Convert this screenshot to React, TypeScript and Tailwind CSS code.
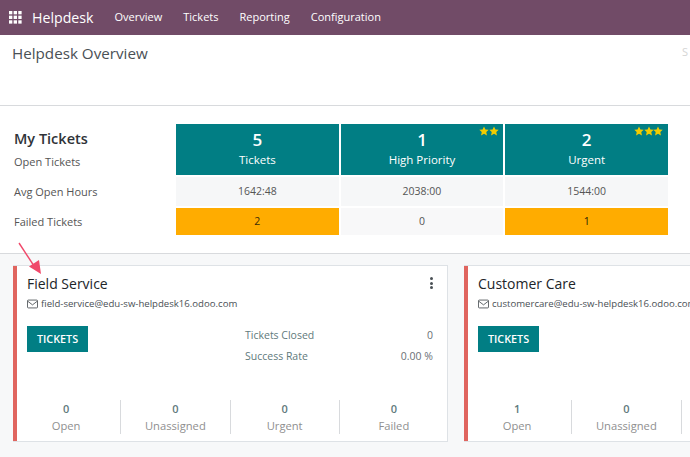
function Star({ count }: { count: number }) {
  return (
    <div className="absolute top-[2px] right-[5px] flex text-[#f3cc00]">
      {Array.from({ length: count }).map((_, i) => (
        <svg key={i} viewBox="0 0 24 24" className="w-[10px] h-[10px] -mx-[0.25px]" fill="currentColor">
          <path d="M12 1l3.4 7.2 7.9 1-5.8 5.4 1.5 7.9L12 18.6l-7 3.9 1.5-7.9L.7 9.2l7.9-1z" />
        </svg>
      ))}
    </div>
  );
}

function MailIcon() {
  return (
    <svg viewBox="0 0 14 12" className="w-[11px] h-[10px] shrink-0" fill="none" stroke="#4a5055" strokeWidth="1.1">
      <rect x="0.6" y="1" width="12.8" height="10" rx="1.2" />
      <path d="M1 2.5l6 4.6 6-4.6" />
    </svg>
  );
}

function TopCell({ value, label, stars }: { value: string; label: string; stars?: number }) {
  return (
    <div className="relative h-[51px] pb-[2px] bg-[#017e84] text-white flex flex-col items-center justify-center">
      {stars ? <Star count={stars} /> : null}
      <div className="text-[17px] leading-[22px] font-semibold">{value}</div>
      <div className="text-[11.5px] leading-[17px]">{label}</div>
    </div>
  );
}

function StatCol({ value, label, last }: { value: string; label: string; last?: boolean }) {
  return (
    <div className={`flex-1 h-[34px] flex flex-col items-center justify-center ${last ? "" : "border-r border-[#d8dadd]"}`}>
      <div className="text-[11px] leading-[16px] font-semibold text-[#5f7a7c]">{value}</div>
      <div className="text-[11.2px] leading-[17px] text-[#8f8f8f]">{label}</div>
    </div>
  );
}

function TeamCard({ name, email, open, showStats }: { name: string; email: string; open: string; showStats?: boolean }) {
  return (
    <div className="w-[435px] shrink-0 h-[177px] bg-white border border-[#dee2e6] border-l-0 flex">
      <div className="w-[4px] bg-[#e0655f] shrink-0" />
      <div className="flex-1 min-w-0 flex flex-col pl-[10px] pt-[8px] pb-[7px]">
        <div className="flex items-start justify-between">
          <div className="text-[14px] leading-[20px] font-medium text-[#212529] whitespace-nowrap">{name}</div>
          {showStats ? (
            <div className="flex flex-col gap-[1.5px] mr-[14px] mt-[3px]">
              <span className="w-[3px] h-[3px] bg-[#4a5055] rounded-full" />
              <span className="w-[3px] h-[3px] bg-[#4a5055] rounded-full" />
              <span className="w-[3px] h-[3px] bg-[#4a5055] rounded-full" />
            </div>
          ) : null}
        </div>
        <div className="flex items-center gap-[3px] mt-[3px] text-[9.6px] leading-[14px] text-[#4a5055] whitespace-nowrap">
          <MailIcon />
          <span>{email}</span>
        </div>
        <div className="flex mt-[15px]">
          <div className="w-[61px] h-[26px] pt-[1px] bg-[#017e84] text-white text-[10.8px] font-semibold flex items-center justify-center shrink-0">
            TICKETS
          </div>
          {showStats ? (
            <div className="ml-[157px] w-[188px] -mt-[1px] text-[10.5px] leading-[21px]">
              <div className="flex justify-between text-[#5f7a7c]">
                <span>Tickets Closed</span>
                <span className="text-[#6b7075]">0</span>
              </div>
              <div className="flex justify-between text-[#5f7a7c]">
                <span>Success Rate</span>
                <span className="text-[#6b7075]">0.00 %</span>
              </div>
            </div>
          ) : null}
        </div>
        <div className="mt-auto -ml-[15px] flex w-[436px] shrink-0">
          <StatCol value={open} label="Open" />
          <StatCol value="0" label="Unassigned" />
          <StatCol value="0" label="Urgent" />
          <StatCol value="0" label="Failed" last />
        </div>
      </div>
    </div>
  );
}

export default function App() {
  return (
    <div className="relative w-[690px] h-[457px] overflow-hidden bg-white text-[#4a5055]" style={{ fontFamily: '"Open Sans", "Noto Sans", sans-serif' }}>
      {/* navbar */}
      <nav className="h-[35px] bg-[#714b67] text-white flex items-center pl-[9px]">
        <svg viewBox="0 0 14 14" className="w-[13px] h-[13px]" fill="#fff">
          <rect x="0" y="0" width="3.6" height="3.6" /><rect x="5" y="0" width="3.6" height="3.6" /><rect x="10" y="0" width="3.6" height="3.6" />
          <rect x="0" y="5" width="3.6" height="3.6" /><rect x="5" y="5" width="3.6" height="3.6" /><rect x="10" y="5" width="3.6" height="3.6" />
          <rect x="0" y="10" width="3.6" height="3.6" /><rect x="5" y="10" width="3.6" height="3.6" /><rect x="10" y="10" width="3.6" height="3.6" />
        </svg>
        <span className="ml-[10px] text-[14.2px]">Helpdesk</span>
        <div className="ml-[21px] flex gap-[21px] text-[11px]">
          <span>Overview</span>
          <span>Tickets</span>
          <span>Reporting</span>
          <span>Configuration</span>
        </div>
      </nav>

      {/* control panel */}
      <div className="h-[71px] border-b border-[#d8dadd] flex justify-between pl-[12px] pt-[7px]">
        <div className="text-[15.2px] leading-[22px] text-[#4a5055]">Helpdesk Overview</div>
        <div className="w-[8px] overflow-hidden pt-[1px] text-[11px] text-[#d5d5d5] leading-[18px]">S</div>
      </div>

      {/* my tickets */}
      <div className="h-[148px] pl-[14px] pt-[18px] flex border-b border-[#d8dadd]">
        <div className="w-[162px] text-[11px] text-[#555]">
          <div className="text-[14.5px] leading-[20px] pt-[5px] font-semibold text-[#2f3338]">My Tickets</div>
          <div className="leading-[16px] mt-[5px]">Open Tickets</div>
          <div className="leading-[16px] mt-[14px]">Avg Open Hours</div>
          <div className="leading-[16px] mt-[14px]">Failed Tickets</div>
        </div>
        <div className="w-[492px] grid grid-cols-3 gap-x-[2px] gap-y-[2px] text-[10.5px] text-[#555] grid-rows-[51px_29px_27px]">
          <TopCell value="5" label="Tickets" />
          <TopCell value="1" label="High Priority" stars={2} />
          <TopCell value="2" label="Urgent" stars={3} />
          <div className="bg-[#f6f7f8] flex items-center justify-center">1642:48</div>
          <div className="bg-[#f6f7f8] flex items-center justify-center">2038:00</div>
          <div className="bg-[#f6f7f8] flex items-center justify-center">1544:00</div>
          <div className="bg-[#ffac00] text-[#3a2c08] flex items-center justify-center">2</div>
          <div className="bg-[#f8f8f9] flex items-center justify-center">0</div>
          <div className="bg-[#ffac00] text-[#1f1a08] flex items-center justify-center">1</div>
        </div>
      </div>

      {/* team cards */}
      <div className="h-[203px] bg-[#f7f8f9] pl-[13px] pt-[11px] flex gap-[16px] overflow-hidden">
        <TeamCard name="Field Service" email="field-service@edu-sw-helpdesk16.odoo.com" open="0" showStats />
        <TeamCard name="Customer Care" email="customercare@edu-sw-helpdesk16.odoo.com" open="1" />
      </div>

      {/* red annotation arrow */}
      <svg className="absolute left-[17px] top-[240px] w-[26px] h-[36px]" viewBox="0 0 26 36" fill="none">
        <path d="M2 3L19 29" stroke="#f0486a" strokeWidth="1.4" />
        <path d="M24 34L12 26.5 L22 20Z" fill="#f0486a" />
      </svg>
    </div>
  );
}
